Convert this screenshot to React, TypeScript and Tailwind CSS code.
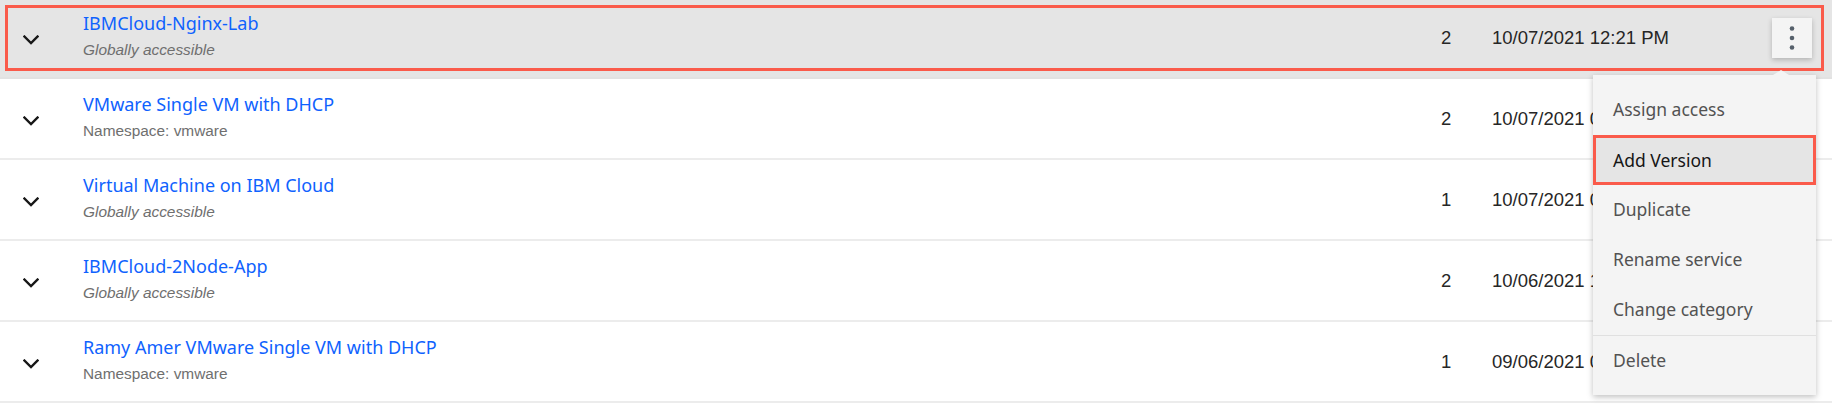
import React from "react";

type Service = {
  name: string;
  scope: string;
  scopeItalic: boolean;
  versions: number;
  updated: string;
  selected?: boolean;
};

const services: Service[] = [
  {
    name: "IBMCloud-Nginx-Lab",
    scope: "Globally accessible",
    scopeItalic: true,
    versions: 2,
    updated: "10/07/2021 12:21 PM",
    selected: true,
  },
  {
    name: "VMware Single VM with DHCP",
    scope: "Namespace: vmware",
    scopeItalic: false,
    versions: 2,
    updated: "10/07/2021 09:48 AM",
  },
  {
    name: "Virtual Machine on IBM Cloud",
    scope: "Globally accessible",
    scopeItalic: true,
    versions: 1,
    updated: "10/07/2021 04:17 PM",
  },
  {
    name: "IBMCloud-2Node-App",
    scope: "Globally accessible",
    scopeItalic: true,
    versions: 2,
    updated: "10/06/2021 11:02 AM",
  },
  {
    name: "Ramy Amer VMware Single VM with DHCP",
    scope: "Namespace: vmware",
    scopeItalic: false,
    versions: 1,
    updated: "09/06/2021 03:35 PM",
  },
];

const menuItems = [
  "Assign access",
  "Add Version",
  "Duplicate",
  "Rename service",
  "Change category",
];

function ChevronDown() {
  return (
    <svg width="16" height="10" viewBox="0 0 16 10" fill="none">
      <path
        d="M1.5 1.5L8 8l6.5-6.5"
        stroke="#161616"
        strokeWidth="2.3"
        strokeLinecap="square"
      />
    </svg>
  );
}

function OverflowIcon() {
  return (
    <svg width="6" height="26" viewBox="0 0 6 26" fill="#56606b">
      <circle cx="3" cy="3.5" r="2.3" />
      <circle cx="3" cy="13" r="2.3" />
      <circle cx="3" cy="22.5" r="2.3" />
    </svg>
  );
}

function ServiceRow({ service }: { service: Service }) {
  return (
    <div
      className={`flex h-[81px] items-center border-b-2 ${
        service.selected
          ? "border-[#e2e2e2] bg-[#e5e5e5]"
          : "border-[#ececec] bg-white"
      }`}
    >
      {/* Expand toggle */}
      <div className="flex w-[62px] justify-center pt-[4px]">
        <ChevronDown />
      </div>

      {/* Name + scope */}
      <div className="flex h-full flex-1 flex-col pl-[21px] pt-[13px]">
        <span
          className="text-[18px] leading-[24px] text-[#0f62fe]"
          style={{ fontFamily: '"Noto Sans", sans-serif' }}
        >
          {service.name}
        </span>
        <span
          className={`mt-[5px] text-[15.4px] leading-[20px] text-[#6f6f6f] ${
            service.scopeItalic ? "italic" : ""
          }`}
          style={{ fontFamily: '"Liberation Sans", Arial, sans-serif' }}
        >
          {service.scope}
        </span>
      </div>

      {/* Versions */}
      <div
        className="w-[51px] text-[18.5px] text-[#262626]"
        style={{ fontFamily: '"Liberation Sans", Arial, sans-serif' }}
      >
        {service.versions}
      </div>

      {/* Last updated */}
      <div
        className="w-[280px] text-[18.5px] text-[#262626]"
        style={{ fontFamily: '"Liberation Sans", Arial, sans-serif' }}
      >
        {service.updated}
      </div>

      {/* Overflow */}
      <div className="mr-[20px] w-[40px]">
        {service.selected && (
          <button className="flex h-[40px] w-[40px] items-center justify-center bg-[#f4f4f4] shadow-[0_2px_5px_rgba(0,0,0,0.22)]">
            <OverflowIcon />
          </button>
        )}
      </div>
    </div>
  );
}

export default function App() {
  return (
    <div className="relative h-[405px] w-[1832px] overflow-hidden bg-white">
      <div className="-mt-[2px]">
        {services.map((s) => (
          <ServiceRow key={s.name} service={s} />
        ))}
      </div>

      {/* Annotation around selected row */}
      <div className="pointer-events-none absolute left-[5px] top-[5px] h-[66px] w-[1819px] border-[3px] border-[#fa5b4b]" />

      {/* Overflow menu */}
      <div
        className="absolute left-[1593px] top-[75px] w-[223px] bg-[#f4f4f4] pb-[9px] pt-[10px] shadow-[0_2px_6px_rgba(0,0,0,0.25)]"
        style={{ fontFamily: '"Noto Sans", sans-serif' }}
      >
        <div className="absolute -top-[5px] left-[180px] h-0 w-0 border-b-[5px] border-l-[8px] border-r-[8px] border-b-[#f4f4f4] border-l-transparent border-r-transparent" />
        {menuItems.map((item) =>
          item === "Add Version" ? (
            <div
              key={item}
              className="flex h-[50px] items-center bg-[#e5e5e5] pl-[20px] text-[17.5px] text-[#161616] ring-[3px] ring-inset ring-[#fa5b4b]"
            >
              {item}
            </div>
          ) : (
            <div
              key={item}
              className="flex h-[50px] items-center pb-[2px] pl-[20px] text-[17.5px] text-[#525252]"
            >
              {item}
            </div>
          )
        )}
        <div className="flex h-[51px] items-center border-t border-[#e0e0e0] pb-[2px] pl-[20px] text-[17.5px] text-[#525252]">
          Delete
        </div>
      </div>
    </div>
  );
}
